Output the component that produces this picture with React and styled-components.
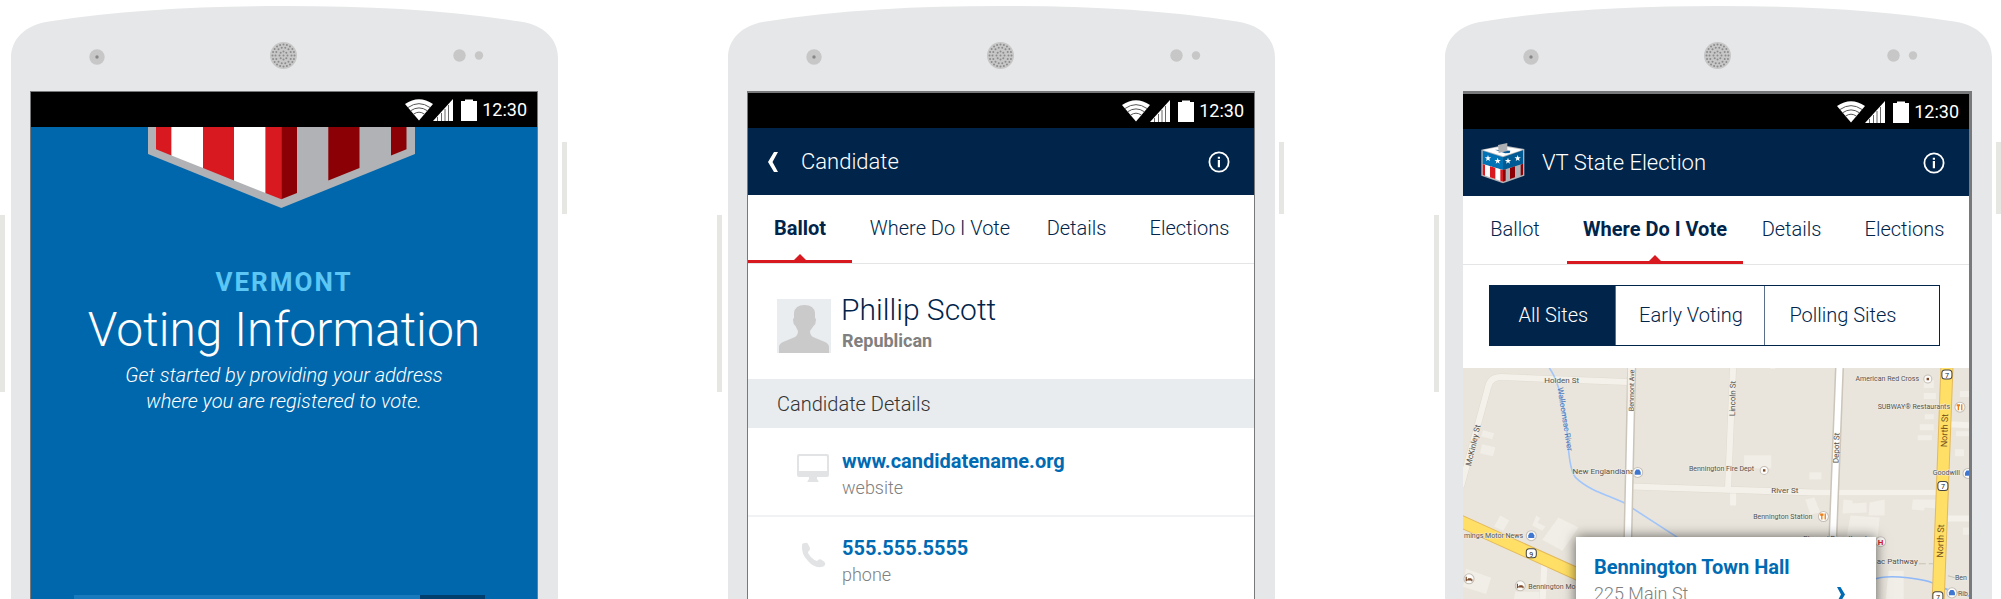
import React from "react";
import styled, { createGlobalStyle, css } from "styled-components";

const color = {
  shell: "#e6e7e8",
  key: "#e6e7e2",
  navy: "#00244a",
  blue: "#0067ac",
  link: "#006bb3",
  red: "#d8191f",
  darkRed: "#8b0004",
  steel: "#b0b2b6",
};

const GlobalStyle = createGlobalStyle`
  * { box-sizing: border-box; }
  body {
    margin: 0;
    background: #fff;
    font-family: Roboto, "Liberation Sans", sans-serif;
    font-weight: 300;
  }
  button, input { font: inherit; border: 0; border-radius: 0; padding: 0; background: none; }
  a { text-decoration: none; color: inherit; }
  svg { display: block; flex: none; }
  h1, h2, h3, p, ul { margin: 0; padding: 0; font-weight: inherit; }
  ul { list-style: none; }
`;

const Showcase = styled.main`
  display: grid;
  grid-template-columns: repeat(3, minmax(0, 1fr));
  column-gap: 150px;
  height: 100vh;
  overflow: hidden;
  padding-top: 6px;
`;

/* ---------- device ---------- */

const Device = styled.article`
  display: flex;
  min-width: 0;
`;

const SideKey = styled.span`
  flex: none;
  width: 5px;
  background: ${color.key};
  ${({ $side }) =>
    $side === "left"
      ? css`height: 177px; margin: 209px 6px 0 0;`
      : css`height: 72px; margin: 136px 0 0 4px;`}
`;

const Body = styled.div`
  flex: 1;
  min-width: 0;
  display: flex;
  flex-direction: column;
`;

const Bezel = styled.svg`
  width: 100%;
  height: 85px;
`;

const Frame = styled.div`
  flex: 1;
  display: flex;
  padding: 0 20px 0 ${({ $inset }) => $inset};
  background: ${color.shell};
`;

const Screen = styled.section`
  flex: 1;
  min-width: 0;
  display: flex;
  flex-direction: column;
  background: ${({ $tone }) => $tone || "#fff"};
  border: solid #77797b;
  border-bottom: 0;
  border-width: ${({ $edge }) => $edge};
`;

const StatusBar = styled.div`
  display: flex;
  align-items: center;
  justify-content: flex-end;
  height: 35px;
  padding: 0 10px;
  background: #000;
  color: #fff;
  font-size: 18px;
  font-weight: 400;
  line-height: 24px;
`;

const Battery = styled.svg`
  margin: 0 5px 0 8px;
`;

const holes = [];
[[0, 1], [4, 8], [8, 14], [11, 20]].forEach(([r, n]) => {
  for (let i = 0; i < n; i++) {
    const a = (i / n) * Math.PI * 2;
    holes.push([272.5 + r * Math.cos(a), 49.5 + r * Math.sin(a)]);
  }
});

function DeviceTop() {
  return (
    <Bezel viewBox="0 0 547 85" preserveAspectRatio="none" aria-hidden="true">
      <path
        d="M0 85V52C0 33 14 19 38 15.500C110 4 190 0 273.500 0S437 4 509 15.500C533 19 547 33 547 52V85Z"
        fill={color.shell}
      />
      <circle cx="86" cy="51" r="7.700" fill="#c7c7c7" />
      <circle cx="86" cy="51" r="1.700" fill="#888" />
      <circle cx="272.500" cy="49.500" r="13.500" fill="#c7c7c7" />
      {holes.map(([x, y], i) => (
        <circle key={i} cx={x} cy={y} r="1" fill="#8c8c8c" />
      ))}
      <circle cx="448.500" cy="49.500" r="6.200" fill="#c7c7c7" />
      <circle cx="468" cy="49.500" r="4.200" fill="#c7c7c7" />
    </Bezel>
  );
}

function Status() {
  return (
    <StatusBar>
      <svg width="28" height="22" viewBox="0 0 28 22" aria-hidden="true">
        <path d="M0 5Q14 -4.500 28 5L14 21.500Z" fill="#fff" />
        <g fill="none" stroke="#555" strokeWidth="1">
          <path d="M3 8.500Q14 .8 25 8.500" />
          <path d="M5.500 11.800Q14 6 22.500 11.800" />
          <path d="M8.500 15.200Q14 11.200 19.500 15.200" />
        </g>
      </svg>
      <svg width="20" height="22" viewBox="0 0 20 22" aria-hidden="true">
        <path d="M0 22L20 0V22Z" fill="#fff" />
        <path d="M4.500 18V22M8.500 14V22M12 10V22M15.500 6V22" stroke="#666" strokeWidth="1" />
      </svg>
      <Battery width="16" height="22" viewBox="0 0 16 22" aria-hidden="true">
        <path d="M0 2H4V.5H12V2H16V22H0Z" fill="#fff" />
      </Battery>
      12:30
    </StatusBar>
  );
}

function Phone({ label, edge, tone, inset = "19px", children }) {
  return (
    <Device aria-label={label}>
      <SideKey $side="left" />
      <Body>
        <DeviceTop />
        <Frame $inset={inset}>
          <Screen $edge={edge} $tone={tone}>
            <Status />
            {children}
          </Screen>
        </Frame>
      </Body>
      <SideKey $side="right" />
    </Device>
  );
}

/* ---------- welcome ---------- */

const Welcome = styled.div`
  display: flex;
  flex-direction: column;
  align-items: center;
  color: #fff;
  text-align: center;
`;

const StateName = styled.h2`
  margin-top: 58px;
  color: #5cc7f5;
  font-size: 26px;
  font-weight: 700;
  line-height: 32px;
  letter-spacing: 2px;
`;

const WelcomeTitle = styled.h1`
  margin-top: 4px;
  font-size: 48px;
  font-weight: 300;
  line-height: 56px;
`;

const WelcomeText = styled.p`
  margin-top: 4px;
  font-size: 20px;
  font-style: italic;
  line-height: 26px;
`;

const AddressForm = styled.form`
  align-self: stretch;
  display: flex;
  height: 60px;
  margin: 181px 52px 0 43px;
`;

const AddressInput = styled.input`
  flex: 1;
  min-width: 0;
  background: #187abc;
  color: #fff;
`;

const AddressButton = styled.button`
  width: 65px;
  background: #00406f;
`;

function Shield() {
  const stripes = [
    [8, 23.5, color.red], [23.5, 55, "#fff"], [55, 86, color.red], [86, 117.5, "#fff"],
    [117.5, 133.3, color.red], [133.3, 149, color.darkRed], [180.3, 211.5, color.darkRed],
    [243, 258.5, color.darkRed],
  ];
  const edgeY = (x) => 72.3 - Math.abs(x - 133.3) * 0.399;
  return (
    <svg width="272" height="81" viewBox="0 0 272 81" aria-hidden="true">
      <path d="M0 0H267V27L133.300 81L0 27Z" fill={color.steel} />
      {stripes.map(([a, b, fill]) => (
        <path key={a} d={`M${a} 0H${b}V${edgeY(b)}L${a} ${edgeY(a)}Z`} fill={fill} />
      ))}
    </svg>
  );
}

/* ---------- shared app parts ---------- */

const AppBar = styled.header`
  display: flex;
  align-items: center;
  height: 67px;
  padding: 0 24px 0 18px;
  background: ${color.navy};
  color: #fff;
`;

const AppTitle = styled.h1`
  flex: 1;
  margin-left: ${({ $gap }) => $gap};
  font-size: 22px;
  line-height: 28px;
`;

const IconButton = styled.button`
  color: inherit;
  cursor: pointer;
`;

const TabBar = styled.nav`
  display: grid;
  grid-template-columns: 104fr 176fr 97fr 129fr;
  border-bottom: 1px solid #e4e5e6;
  color: ${color.navy};
`;

const Tab = styled.a`
  position: relative;
  height: 68px;
  padding-top: 21px;
  font-size: 20px;
  line-height: 24px;
  text-align: center;
  white-space: nowrap;
  ${({ "aria-current": current }) =>
    current &&
    css`
      border-bottom: 3px solid ${color.red};
      font-weight: 700;
      &::after {
        content: "";
        position: absolute;
        bottom: 0;
        left: 50%;
        margin-left: -6px;
        border: 6px solid transparent;
        border-top: 0;
        border-bottom-color: ${color.red};
      }
    `}
`;

function InfoIcon() {
  return (
    <IconButton aria-label="Information">
      <svg width="22" height="22" viewBox="0 0 22 22">
        <circle cx="11" cy="11" r="9.600" fill="none" stroke="currentColor" strokeWidth="1.800" />
        <path d="M9.800 9H12V16.200H9.800ZM9.800 5.700H12V7.800H9.800Z" fill="currentColor" />
      </svg>
    </IconButton>
  );
}

function Tabs({ active }) {
  return (
    <TabBar>
      {["Ballot", "Where Do I Vote", "Details", "Elections"].map((name) => (
        <Tab key={name} href="#" aria-current={name === active ? "page" : undefined}>
          {name}
        </Tab>
      ))}
    </TabBar>
  );
}

/* ---------- candidate ---------- */

const Profile = styled.div`
  display: flex;
  gap: 10px;
  height: 115px;
  padding: 28px 29px 0;
`;

const Avatar = styled.svg`
  margin-top: 7px;
`;

const PersonName = styled.h2`
  color: ${color.navy};
  font-size: 30px;
  line-height: 36px;
`;

const Party = styled.p`
  padding-left: 1px;
  color: #808080;
  font-size: 18px;
  font-weight: 700;
  line-height: 26px;
`;

const SectionTitle = styled.h3`
  padding: 1px 29px 0;
  background: #e8ecef;
  color: #333;
  font-size: 20px;
  line-height: 48px;
`;

const ContactList = styled.ul`
  padding-top: 2px;
`;

const Contact = styled.li`
  display: flex;
  gap: 13px;
  padding: 18px 29px 13px 49px;
  border-bottom: 2px solid #f1f2f3;
`;

const ContactIcon = styled.svg`
  margin-top: 6px;
`;

const ContactLink = styled.a`
  display: block;
  color: ${color.link};
  font-size: 20px;
  font-weight: 700;
  line-height: 26px;
`;

const ContactKind = styled.span`
  display: block;
  color: #808080;
  font-size: 18px;
  line-height: 28px;
`;

/* ---------- voting sites ---------- */

const Segments = styled.div`
  display: grid;
  grid-template-columns: 125fr 150fr 175fr;
  height: 61px;
  margin: 20px 29px 22px 26px;
  border: 1px solid ${color.navy};
`;

const Segment = styled.button`
  min-width: 0;
  padding: ${({ $align }) => ($align === "left" ? "0 0 2px 24px" : "0 16px 2px 18px")};
  color: ${({ "aria-pressed": on }) => (on ? "#fff" : color.navy)};
  background: ${({ "aria-pressed": on }) => (on ? color.navy : "#fff")};
  font-size: 20px;
  line-height: 24px;
  text-align: ${({ $align }) => $align || "center"};
  white-space: nowrap;
  cursor: pointer;
  & + & { border-left: 1px solid #5a708a; }
`;

const MapArea = styled.div`
  position: relative;
  flex: 1;
  overflow: hidden;
  background: #e9e5dc;
`;

const MapDrawing = styled.svg`
  width: 100%;
  height: auto;
  font-family: Roboto, "Liberation Sans", sans-serif;
  font-weight: 400;
`;

const SiteCard = styled.a`
  position: absolute;
  top: 169px;
  left: 113px;
  right: 93px;
  display: flex;
  align-items: flex-end;
  justify-content: space-between;
  padding: 17px 31px 41px 18px;
  background: #fff;
  box-shadow: 0 0 12px rgba(0, 0, 0, 0.6);
`;

const SiteName = styled.h2`
  color: ${color.link};
  font-size: 20px;
  font-weight: 700;
  line-height: 26px;
`;

const SiteAddress = styled.p`
  color: #808080;
  font-size: 18px;
  line-height: 28px;
`;

const Chevron = styled.svg`
  margin-bottom: 6px;
`;

const star = (cx, cy, r) =>
  Array.from({ length: 10 }, (_, i) => {
    const a = (i * Math.PI) / 5 - Math.PI / 2;
    const k = i % 2 ? r * 0.4 : r;
    return `${cx + k * Math.cos(a)},${cy + k * Math.sin(a)}`;
  }).join(" ");

function BallotBox() {
  return (
    <svg width="44" height="42" viewBox="62 188 132 126" aria-hidden="true">
      <path d="M63 211L128 198L192 209V289L128 312L63 289Z" fill={color.steel} />
      <path d="M67 212L128 201L188 211L128 231Z" fill="#fff" />
      <path d="M104 211L150 214L148 221L134 222Z" fill="#0a5a96" />
      <path d="M113 197L141 191V215L115 221Z" fill="#aeb0b3" />
      <path d="M67 214L128 234V272L67 254Z" fill="#0073b7" />
      <path d="M128 234L188 213V253L128 272Z" fill="#005a94" />
      <path d="M67 254L128 272V307L67 286Z" fill="#fff" />
      <path d="M67 254L74 256V289L67 286ZM89 261L105 265V299L89 294ZM120 270L128 272V307L120 304Z" fill={color.red} />
      <path d="M128 272L136 270V304L128 307ZM149 266L164 261V294L149 299ZM181 256L188 253V286L181 289Z" fill={color.darkRed} />
      {[[83, 237], [112, 245], [143, 245], [172, 237]].map(([x, y]) => (
        <polygon key={x} points={star(x, y, 10)} fill="#fff" />
      ))}
    </svg>
  );
}

function Poi({ x, y, tint = "#7b4a2a", kind, r = 5 }) {
  return (
    <g transform={`translate(${x} ${y})`}>
      <circle r={r} fill="#fdfcfa" stroke="#c4bfb6" strokeWidth="1" />
      {kind === "food" && <path d="M-1.600 -3V3M1.800 -3V3M-2.600 -3V-.8M-.6 -3V-.8" stroke={tint} strokeWidth="1.300" />}
      {kind === "shop" && <path d="M-3 2.400V-.4L-1.500 -2.800H1.500L3 -.4V2.400Z" fill={tint} />}
      {kind === "bed" && <path d="M-2.800 -2V2.300M-2.800 1H2.800V2.300M-1 0H2.400" stroke={tint} strokeWidth="1.200" fill="none" />}
      {kind === "dot" && <rect x="-1.200" y="-1.200" width="2.400" height="2.400" fill={tint} />}
      {kind === "hospital" && (
        <text y="3" fontSize="8" fontWeight="700" textAnchor="middle" fill={tint}>H</text>
      )}
    </g>
  );
}

function RouteBadge({ x, y, children }) {
  return (
    <g transform={`translate(${x} ${y})`}>
      <rect x="-5" y="-5" width="10" height="9" rx="3" fill="#fff" stroke="#444" strokeWidth="1" />
      <text y="3" fontSize="7" textAnchor="middle" fill="#222">{children}</text>
    </g>
  );
}

function TownMap() {
  return (
    <MapDrawing viewBox="0 0 504 240" role="img" aria-label="Map of Bennington">
      <rect width="504" height="240" fill="#e9e5dc" />
      <g fill="#f1eee7">
        <path d="M20 62L31 65L29 71L18 68ZM19 76L32 79L30 88L17 85Z" />
        <path d="M37 147L46 152L40 162L31 158ZM73 147L77 150L74 154L82 158L79 162L69 157Z" />
        <path d="M95 149L115 159L99 182L79 171Z" />
        <path d="M3 200L28 209L23 225L0 218Z" />
        <rect x="280" y="87" width="27" height="13" />
        <rect x="345" y="104" width="12" height="7" />
        <path d="M341 131L350 129L356 144L346 146ZM379 131L388 132L388 135L402 134V144L378 145ZM405 134L420 131V147L404 147ZM386 147L415 149L413 169H382ZM448 131L471 131V140L460 139L459 142L447 141Z" />
        <path d="M459 12H469V20H459ZM459 25H471V31H459ZM460 46H469V51H460ZM455 56H469V62H455ZM453 67H467V72H453ZM495 23H504V29H495ZM491 63H504V68H491ZM490 81H499V88H490ZM498 159H504V166H498Z" />
        <path d="M424 202H439V240H420ZM52 223H76V240H49ZM306 0H311V1H306Z" />
      </g>
      <g fill="none" strokeLinejoin="round">
        <g stroke="#e0dbd1" strokeWidth="7">
          <path d="M-2 118L25 19Q27 9 38 9L164 14M168 118L256 121L350 124H473M269 0L264 119" />
        </g>
        <g stroke="#f4f1ea" strokeWidth="6">
          <path d="M-2 118L25 19Q27 9 38 9L164 14M168 118L256 121L350 124H473M269 0L264 119M269 125V137M484 56L504 57M483 150H504M81 195L79 240" />
        </g>
        <path d="M86 0C95 12 99 32 102 50S104 98 112 109C125 122 145 127 160 134L214 169" stroke="#a2c6fb" strokeWidth="1.600" />
        <path d="M408 211Q420 206 443 209T469 215T504 227" stroke="#8fb9f8" strokeWidth="1.600" />
        <path d="M168 0L164 180M375 0L368 180" stroke="#cbc5ba" strokeWidth="9" />
        <path d="M168 0L164 180M375 0L368 180" stroke="#fff" strokeWidth="6" />
        <path d="M167 0V43" stroke="#f4f1ea" strokeWidth="6" />
        <path d="M-4 152L120 208M482 0L473 240" stroke="#e3b95b" strokeWidth="13" />
        <path d="M-4 152L120 208M482 0L473 240" stroke="#ffdf66" strokeWidth="11" />
        <path d="M454 195H461M464 195H469M483 207L490 209" stroke="#c9c2b4" strokeWidth="1" />
      </g>
      <g fill="#55524d" fontSize="8" stroke="#f1eee7" strokeWidth="1" paintOrder="stroke">
        <text x="81" y="15">Holden St</text>
        <text x="307" y="125">River St</text>
        <text x="109" y="106">New Englandiana</text>
        <text x="225" y="103" fontSize="7">Bennington Fire Dept</text>
        <text x="289" y="150" fontSize="7">Bennington Station</text>
        <text x="391" y="13" fontSize="7">American Red Cross</text>
        <text x="413" y="41" fontSize="7">SUBWAY® Restaurants</text>
        <text x="468" y="107" fontSize="7">Goodwill</text>
        <text x="339" y="172" fontSize="7">Planned Parenthood</text>
        <text x="412" y="195">ac Pathway</text>
        <text x="490" y="211" fontSize="7">Ben</text>
        <text x="493" y="227" fontSize="7">Rib</text>
        <text x="1" y="169" fontSize="7">mings Motor News</text>
        <text x="65" y="220" fontSize="7">Bennington Mo</text>
        <text transform="translate(8 98) rotate(-77)">McKinley St</text>
        <text transform="translate(170 43) rotate(-89)" fontSize="7">Benmont Ave</text>
        <text transform="translate(271 48) rotate(-89)">Lincoln St</text>
        <text transform="translate(374 95) rotate(-88)">Depot St</text>
      </g>
      <g fill="#7a5420" fontSize="9">
        <text transform="translate(482 79) rotate(-88)">North St</text>
        <text transform="translate(478 189) rotate(-88)">North St</text>
      </g>
      <text transform="translate(94 20) rotate(81)" fontSize="8" fill="#4a78b8">Walloomsac River</text>
      <Poi x={174} y={104} tint="#3f76d0" kind="shop" />
      <Poi x={68} y={167} tint="#3f76d0" kind="shop" />
      <Poi x={503} y={105} tint="#3f76d0" kind="shop" />
      <Poi x={487} y={224} tint="#3f76d0" kind="shop" />
      <Poi x={300} y={102} kind="dot" r={4} />
      <Poi x={463} y={11} kind="dot" r={4} />
      <Poi x={359} y={148} tint="#f07d12" kind="food" />
      <Poi x={495} y={39} tint="#f07d12" kind="food" />
      <Poi x={6} y={210} kind="bed" />
      <Poi x={57} y={217} kind="bed" />
      <Poi x={416} y={173} tint="#e0222c" kind="hospital" />
      <RouteBadge x={68} y={185}>9</RouteBadge>
      <RouteBadge x={482} y={7}>7</RouteBadge>
      <RouteBadge x={478} y={118}>7</RouteBadge>
      <RouteBadge x={473} y={228}>7</RouteBadge>
    </MapDrawing>
  );
}

export default function App() {
  return (
    <>
      <GlobalStyle />
      <Showcase>
        <Phone label="Welcome screen" edge="1px 1px 0" tone={color.blue}>
          <Welcome>
            <Shield />
            <StateName>VERMONT</StateName>
            <WelcomeTitle>Voting Information</WelcomeTitle>
            <WelcomeText>
              Get started by providing your address
              <br />
              where you are registered to vote.
            </WelcomeText>
            <AddressForm onSubmit={(e) => e.preventDefault()}>
              <AddressInput aria-label="Address" />
              <AddressButton aria-label="Find" />
            </AddressForm>
          </Welcome>
        </Phone>

        <Phone label="Candidate screen" edge="2px 1px 0">
          <AppBar>
            <IconButton aria-label="Back">
              <svg width="14" height="22" viewBox="0 0 14 22">
                <path d="M8 1H12L6.500 11L12 21H8L2 11Z" fill="currentColor" />
              </svg>
            </IconButton>
            <AppTitle $gap="21px">Candidate</AppTitle>
            <InfoIcon />
          </AppBar>
          <Tabs active="Ballot" />
          <Profile>
            <Avatar width="54" height="54" viewBox="0 0 54 54" aria-hidden="true">
              <rect width="54" height="54" fill="#e9edf0" />
              <path
                d="M2 54V48Q2 45 6 43L18 38Q21 36 21 32L18.500 27Q16 25 16 21Q16 19 17 19V14Q18 6 27.500 6T38 14V19Q39 19 39 21Q39 25 36.500 27L33 32Q33 36 36 38L48 43Q52 45 52 48V54Z"
                fill="#cacaca"
              />
            </Avatar>
            <div>
              <PersonName>Phillip Scott</PersonName>
              <Party>Republican</Party>
            </div>
          </Profile>
          <SectionTitle>Candidate Details</SectionTitle>
          <ContactList>
            <Contact>
              <ContactIcon width="32" height="28" viewBox="0 0 32 28" aria-hidden="true">
                <path
                  fillRule="evenodd"
                  fill="#e2e3e4"
                  d="M2 0H30Q32 0 32 2V21Q32 23 30 23H20V25L21.500 27V28H10.500V27L12 25V23H2Q0 23 0 21V2Q0 0 2 0ZM3 2Q2 2 2 3V17H30V3Q30 2 29 2Z"
                />
              </ContactIcon>
              <div>
                <ContactLink href="#">www.candidatename.org</ContactLink>
                <ContactKind>website</ContactKind>
              </div>
            </Contact>
            <Contact>
              <ContactIcon width="32" height="28" viewBox="0 0 32 28" aria-hidden="true">
                <path
                  fill="#e2e3e4"
                  d="M5 4Q5 2 8 2Q10 1 11 3L13 7Q13.500 9 11 11Q11 13 15 17Q18 20 20 20Q22 17.500 24 18.500L27 20.500Q29 22 28 24Q27 26 24 26Q17 27 11 20Q4 13 5 4Z"
                />
              </ContactIcon>
              <div>
                <ContactLink href="#">555.555.5555</ContactLink>
                <ContactKind>phone</ContactKind>
              </div>
            </Contact>
          </ContactList>
        </Phone>

        <Phone label="Voting sites screen" edge="3px 3px 0 0" inset="18px">
          <AppBar>
            <BallotBox />
            <AppTitle $gap="17px">VT State Election</AppTitle>
            <InfoIcon />
          </AppBar>
          <Tabs active="Where Do I Vote" />
          <Segments>
            <Segment aria-pressed={true}>All Sites</Segment>
            <Segment aria-pressed={false}>Early Voting</Segment>
            <Segment aria-pressed={false} $align="left">Polling Sites</Segment>
          </Segments>
          <MapArea>
            <TownMap />
            <SiteCard href="#">
              <div>
                <SiteName>Bennington Town Hall</SiteName>
                <SiteAddress>225 Main St</SiteAddress>
              </div>
              <Chevron width="8" height="15" viewBox="0 0 8 15" aria-hidden="true">
                <path d="M0 0H3.500L8 7.500L3.500 15H0L4 7.500Z" fill={color.link} />
              </Chevron>
            </SiteCard>
          </MapArea>
        </Phone>
      </Showcase>
    </>
  );
}
